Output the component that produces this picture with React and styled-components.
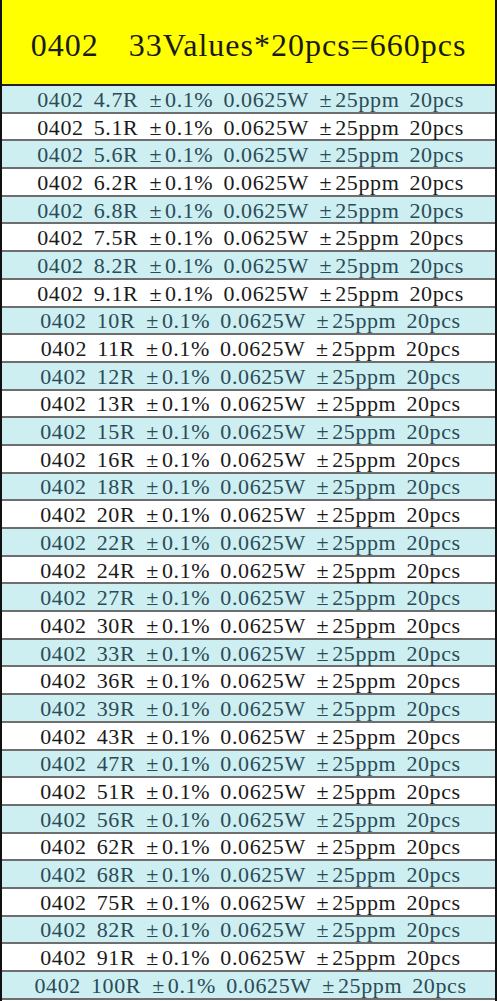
import React from 'react'
import styled, { createGlobalStyle } from 'styled-components'

const GlobalStyle = createGlobalStyle`
  html, body {
    margin: 0;
    padding: 0;
    background: #fff;
  }
`

const values = ['4.7', '5.1', '5.6', '6.2', '6.8', '7.5', '8.2', '9.1', '10', '11', '12', '13', '15', '16', '18', '20', '22', '24', '27', '30', '33', '36', '39', '43', '47', '51', '56', '62', '68', '75', '82', '91', '100']

const Table = styled.div`
  width: 497px;
  height: 1001px;
  overflow: hidden;
  box-sizing: border-box;
  border-left: 2px solid #111;
  border-right: 2px solid #111;
  font-family: "Liberation Serif", "Noto Sans CJK SC", serif;
`

const Header = styled.div`
  height: 86px;
  box-sizing: border-box;
  background: #ffff00;
  border-bottom: 2px solid #222;
  display: flex;
  align-items: center;
  justify-content: center;
  padding-top: 6px;
  font-size: 32px;
  color: #1a1a1a;
  letter-spacing: 1px;
  word-spacing: 6px;
  white-space: pre;
`

const Row = styled.div`
  height: 27.7px;
  box-sizing: border-box;
  background: ${p => (p.$alt ? '#cdeff2' : '#ffffff')};
  color: ${p => (p.$alt ? '#2c4b56' : '#1a1a1a')};
  border-bottom: 2px solid #6e6e6e;
  display: flex;
  align-items: center;
  justify-content: center;
  padding: 2px 0 0 4px;
  font-size: 22px;
  letter-spacing: 0.6px;
  word-spacing: 4px;
  white-space: pre;
`

const Pm = styled.span`
  display: inline-block;
  margin: 0 3px 0 1px;
`

export default function App() {
  return (
    <>
      <GlobalStyle />
      <Table>
        <Header>0402  33Values*20pcs=660pcs</Header>
        {values.map((v, i) => (
          <Row key={v} $alt={i % 2 === 0}>
            {`0402 ${v}R `}<Pm>±</Pm>{`0.1% 0.0625W `}<Pm>±</Pm>{`25ppm 20pcs`}
          </Row>
        ))}
      </Table>
    </>
  )
}
